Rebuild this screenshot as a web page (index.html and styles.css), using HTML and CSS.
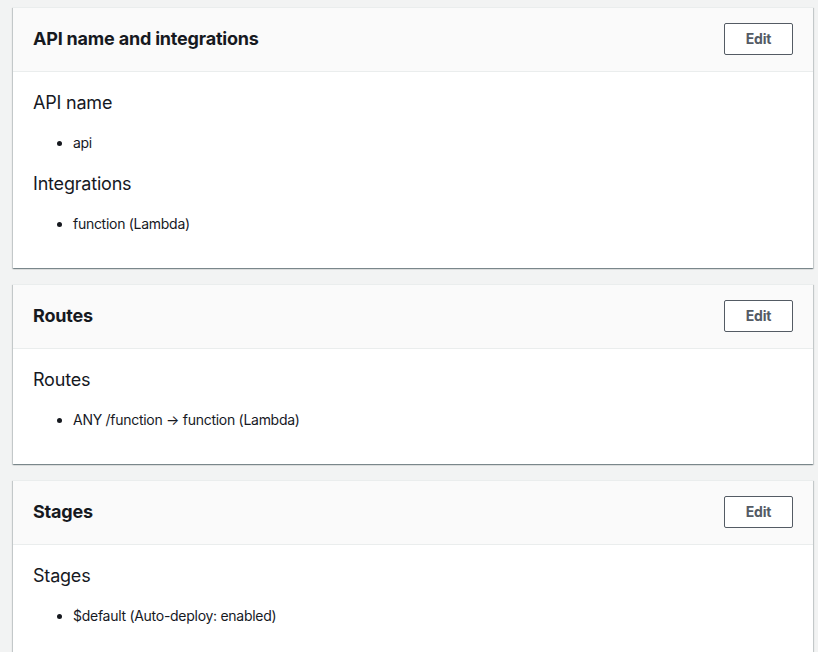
FILE: index.html
```html
<!DOCTYPE html>
<html lang="en">
<head>
<meta charset="utf-8">
<title>Review</title>
<link rel="stylesheet" href="styles.css">
</head>
<body>
<main class="page">
  <section class="card">
    <header class="card-header">
      <h2 class="card-title">API name and integrations</h2>
      <button class="btn" type="button">Edit</button>
    </header>
    <div class="card-body">
      <h3 class="group-title">API name</h3>
      <ul class="items">
        <li>api</li>
      </ul>
      <h3 class="group-title">Integrations</h3>
      <ul class="items">
        <li>function (Lambda)</li>
      </ul>
    </div>
  </section>

  <section class="card">
    <header class="card-header">
      <h2 class="card-title">Routes</h2>
      <button class="btn" type="button">Edit</button>
    </header>
    <div class="card-body">
      <h3 class="group-title">Routes</h3>
      <ul class="items">
        <li>ANY /function → function (Lambda)</li>
      </ul>
    </div>
  </section>

  <section class="card">
    <header class="card-header">
      <h2 class="card-title">Stages</h2>
      <button class="btn" type="button">Edit</button>
    </header>
    <div class="card-body">
      <h3 class="group-title">Stages</h3>
      <ul class="items">
        <li>$default (Auto-deploy: enabled)</li>
      </ul>
    </div>
  </section>
</main>
</body>
</html>
```

FILE: styles.css
```css
* { box-sizing: border-box; }

html, body {
  margin: 0;
  background: #f2f3f3;
}

body {
  font-family: Inter, Roboto, "Noto Sans", Arial, sans-serif;
  color: #16191f;
}

.page {
  display: flex;
  flex-direction: column;
  gap: 16px;
  padding: 7px 5px 0 13px;
}

.card {
  background: #ffffff;
  border-top: 1px solid #eaeded;
  box-shadow: 0 1px 1px 0 rgba(0, 28, 36, 0.3), 1px 1px 1px 0 rgba(0, 28, 36, 0.15), -1px 1px 1px 0 rgba(0, 28, 36, 0.15);
}

.card-header {
  display: flex;
  align-items: center;
  justify-content: space-between;
  height: 64px;
  padding: 0 20px 2px;
  background: #fafafa;
  border-bottom: 1px solid #eaeded;
}

.card-title {
  margin: 0;
  font-size: 18px;
  line-height: 22px;
  font-weight: 700;
  letter-spacing: -0.2px;
  color: #16191f;
}

.btn {
  width: 69px;
  height: 32px;
  padding: 0;
  background: #ffffff;
  border: 1px solid #545b64;
  border-radius: 2px;
  font-family: inherit;
  font-size: 14px;
  font-weight: 700;
  letter-spacing: -0.2px;
  color: #545b64;
}

.card-body {
  padding: 20px 20px 14px;
}

.group-title {
  margin: 0 0 18px;
  font-size: 18px;
  line-height: 22px;
  font-weight: 400;
  letter-spacing: -0.2px;
}

.items {
  margin: 0 0 19px;
  padding-left: 40px;
  font-size: 14px;
  line-height: 22px;
  letter-spacing: -0.28px;
}
```
